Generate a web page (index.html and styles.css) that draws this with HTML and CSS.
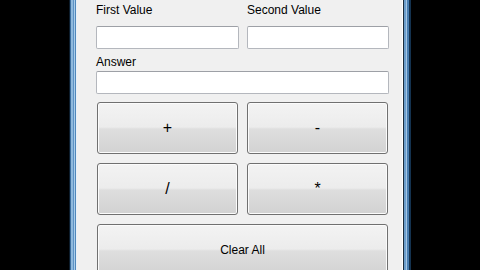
FILE: index.html
```html
<!DOCTYPE html>
<html lang="en">
<head>
    <meta charset="UTF-8">
    <meta name="viewport" content="width=device-width, initial-scale=1.0">
    <title>Calculator</title>
    <link rel="stylesheet" href="styles.css">
</head>
<body>
    <div class="window">
        <div class="client">
            <div class="fields">
                <label class="field-label" for="first">First Value</label>
                <label class="field-label" for="second">Second Value</label>
                <input type="text" id="first" class="textbox">
                <input type="text" id="second" class="textbox">
                <label class="field-label answer-label" for="answer">Answer</label>
                <input type="text" id="answer" class="textbox wide">
            </div>
            <div class="buttons">
                <button class="btn sym">+</button>
                <button class="btn sym">-</button>
                <button class="btn sym">/</button>
                <button class="btn sym">*</button>
                <button class="btn wide">Clear All</button>
            </div>
        </div>
    </div>
</body>
</html>
```

FILE: styles.css
```css
html, body {
    margin: 0;
    padding: 0;
    background-color: #000;
    height: 270px;
    overflow: hidden;
}
.window {
    margin-left: 69px;
    width: 342px;
    height: 270px;
    box-sizing: border-box;
    padding: 0 9px 0 8px;
    display: flex;
    background: linear-gradient(to right,
        #0d1d2c 0, #0d1d2c 1px,
        #3c6f9e 1px, #3c6f9e 2px,
        #8fb9dd 2px, #8fb9dd 4px,
        #5d92c4 4px, #5d92c4 5px,
        #a9cdea 5px, #a9cdea 6px,
        #4f87bb 6px, #4f87bb 7px,
        #e8f0f7 7px, #e8f0f7 8px,
        #f0f0f0 8px, #f0f0f0 calc(100% - 9px),
        #ffffff calc(100% - 9px), #ffffff calc(100% - 8px),
        #1a2c3c calc(100% - 8px), #1a2c3c calc(100% - 7px),
        #6b9dcb calc(100% - 7px), #6b9dcb calc(100% - 5px),
        #a6c8e6 calc(100% - 5px), #a6c8e6 calc(100% - 4px),
        #4a7fb2 calc(100% - 4px), #4a7fb2 calc(100% - 2px),
        #14324f calc(100% - 2px), #14324f 100%);
}
.client {
    flex: 1;
    background-color: #f0f0f0;
    padding: 3px 13px 0 19px;
    font-family: "Liberation Sans", Arial, sans-serif;
    font-size: 12px;
    color: #000;
}
.fields {
    display: grid;
    grid-template-columns: 143px 142px;
    column-gap: 8px;
}
.field-label {
    line-height: 14px;
    margin-bottom: 9px;
}
.answer-label {
    grid-column: 1 / 3;
    margin-top: 6px;
    margin-bottom: 2px;
}
.textbox {
    box-sizing: border-box;
    height: 23px;
    margin: 0;
    border: 1px solid #b4b7bd;
    border-top-color: #9da0a6;
    border-radius: 2px;
    background-color: #fff;
    font-family: inherit;
    font-size: 12px;
}
.textbox.wide {
    grid-column: 1 / 3;
}
.buttons {
    display: grid;
    grid-template-columns: 141px 141px;
    column-gap: 9px;
    row-gap: 9px;
    margin: 8px 0 0 1px;
}
.btn {
    height: 52px;
    margin: 0;
    padding: 0;
    border: 1px solid #707070;
    border-radius: 3px;
    background: linear-gradient(#f3f3f3 0%, #ececec 48%, #dedede 52%, #d2d2d2 100%);
    box-shadow: inset 0 0 0 1px #fbfbfb;
    font-family: "Liberation Sans", Arial, sans-serif;
    font-size: 12px;
    color: #000;
}
.btn.sym {
    font-size: 16px;
}
.btn.wide {
    grid-column: 1 / 3;
}
```
